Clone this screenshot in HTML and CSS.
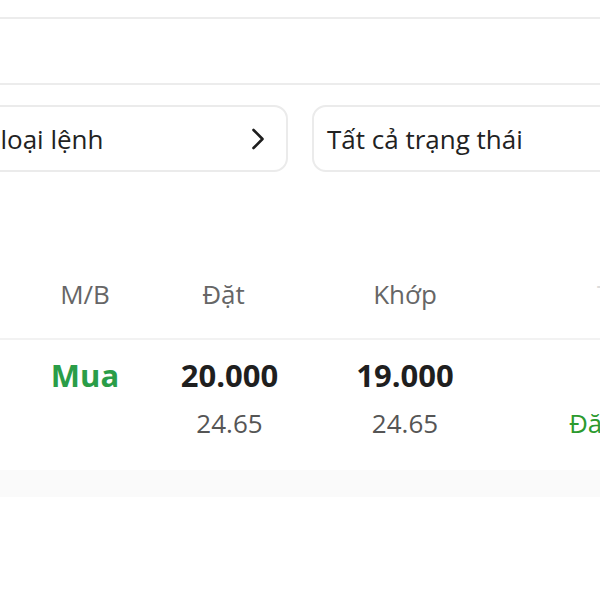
FILE: index.html
```html
<!DOCTYPE html>
<html lang="vi">
<head>
<meta charset="utf-8">
<link rel="stylesheet" href="styles.css">
</head>
<body>
<div class="page">
  <div class="topbar"></div>
  <div class="search"></div>
  <div class="filters">
    <div class="filter filter-type">
      <span class="filter-text">Tất cả loại lệnh</span>
      <svg class="chev" width="14" height="22" viewBox="0 0 14 22"><path d="M2.5 2 L11.5 11 L2.5 20" fill="none" stroke="#1e1e1e" stroke-width="2.6" stroke-linecap="round" stroke-linejoin="round"/></svg>
    </div>
    <div class="filter">
      <span class="filter-text">Tất cả trạng thái</span>
    </div>
  </div>
  <div class="table">
    <div class="thead">
      <div class="th">M/B</div>
      <div class="th th-dat">Đặt</div>
      <div class="th">Khớp</div>
      <div class="th th-status">Trạng thái</div>
    </div>
    <div class="trow">
      <div class="cell"><div class="val buy">Mua</div></div>
      <div class="cell"><div class="val">20.000</div><div class="sub">24.65</div></div>
      <div class="cell"><div class="val">19.000</div><div class="sub">24.65</div></div>
      <div class="cell cell-status"><div class="val"></div><div class="sub status">Đăng ký</div></div>
    </div>
  </div>
  <div class="band"></div>
</div>
</body>
</html>
```
FILE: styles.css
```css
html, body {
  margin: 0;
  padding: 0;
  background: #ffffff;
}
body {
  font-family: "Open Sans", "Noto Sans", sans-serif;
  overflow: hidden;
  width: 600px;
  height: 600px;
}
.page {
  width: 600px;
  overflow: hidden;
}
.topbar {
  height: 17px;
  border-bottom: 2px solid #ececec;
}
.search {
  height: 64px;
  border-bottom: 2px solid #ececec;
}
.filters {
  display: flex;
  gap: 24px;
  margin-top: 20px;
  margin-left: -90px;
  width: 820px;
}
.filter {
  box-sizing: border-box;
  flex: none;
  width: 374px;
  height: 67px;
  border: 2px solid #ebebeb;
  border-radius: 14px;
  display: flex;
  align-items: center;
  justify-content: space-between;
  padding: 0 21px 0 13px;
}
.filter-type {
  width: 378px;
  padding-left: 10px;
}
.filter-text {
  font-size: 26px;
  color: #222222;
  white-space: nowrap;
}
.chev {
  flex: none;
}
.table {
  width: 820px;
}
.thead, .trow {
  display: grid;
  grid-template-columns: 170px 119px 232px 300px;
}
.thead {
  padding-top: 104px;
  padding-bottom: 26px;
  border-bottom: 2px solid #f2f2f2;
}
.th {
  font-size: 26px;
  line-height: 36px;
  color: #666666;
  text-align: center;
}
.th-dat {
  padding-right: 12px;
}
.th-status {
  text-align: left;
  padding-left: 76px;
  color: #dcdcdc;
}
.trow {
  padding-top: 14px;
  padding-bottom: 29px;
}
.cell {
  display: flex;
  flex-direction: column;
  align-items: center;
  gap: 9px;
}
.cell-status {
  align-items: flex-start;
  padding-left: 48px;
}
.val {
  font-size: 31px;
  font-weight: 700;
  line-height: 42px;
  height: 42px;
  color: #1f1f1f;
}
.val.buy {
  color: #2a9d48;
}
.sub {
  font-size: 26px;
  line-height: 36px;
  color: #555555;
}
.sub.status {
  color: #2b9a2e;
}
.band {
  height: 27px;
  background: #fafafa;
}
```
